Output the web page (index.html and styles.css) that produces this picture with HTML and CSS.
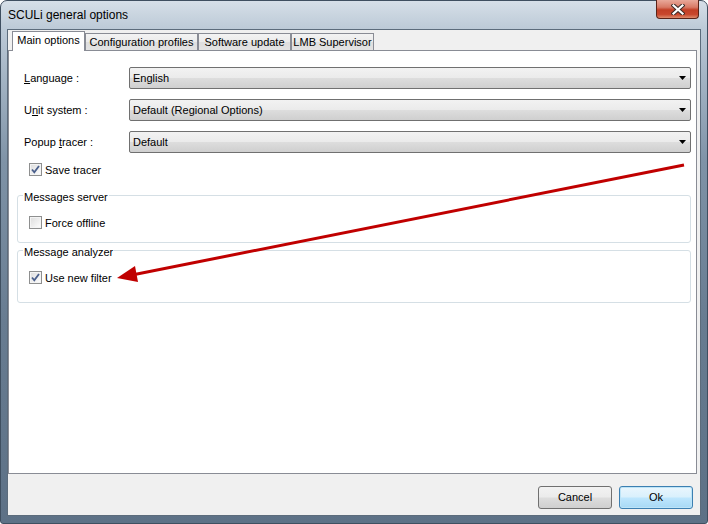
FILE: index.html
```html
<!DOCTYPE html>
<html lang="en">
<head>
    <meta charset="UTF-8">
    <link rel="stylesheet" href="styles.css">
    <title>SCULi general options</title>
</head>
<body>

    <div class="window">
        <div class="titlebar">
            <span class="title">SCULi general options</span>
            <div class="close-button">
                <svg width="14" height="11" viewBox="0 0 14 11">
                    <path d="M2.5 1.5L11.5 9.5M11.5 1.5L2.5 9.5" stroke="#3c2a26" stroke-width="4.2" stroke-linecap="square"/>
                    <path d="M2.5 1.5L11.5 9.5M11.5 1.5L2.5 9.5" stroke="#fff" stroke-width="2.2" stroke-linecap="square"/>
                </svg>
            </div>
        </div>

        <div class="client">
            <div class="tabs">
                <div class="tab active" style="width: 73px">Main options</div>
                <div class="tab" style="width: 113px">Configuration profiles</div>
                <div class="tab" style="width: 93px">Software update</div>
                <div class="tab" style="width: 83px">LMB Supervisor</div>
            </div>

            <div class="panel">
                <div class="field-row">
                    <label><u>L</u>anguage :</label>
                    <div class="combo"><span>English</span><svg width="7" height="4" viewBox="0 0 7 4"><path d="M0 0h7l-3.5 4z" fill="#000"/></svg></div>
                </div>
                <div class="field-row">
                    <label>U<u>n</u>it system :</label>
                    <div class="combo"><span>Default (Regional Options)</span><svg width="7" height="4" viewBox="0 0 7 4"><path d="M0 0h7l-3.5 4z" fill="#000"/></svg></div>
                </div>
                <div class="field-row">
                    <label>Popup <u>t</u>racer :</label>
                    <div class="combo"><span>Default</span><svg width="7" height="4" viewBox="0 0 7 4"><path d="M0 0h7l-3.5 4z" fill="#000"/></svg></div>
                </div>

                <div class="check-row save-tracer">
                    <span class="checkbox checked"></span>
                    <span>Save tracer</span>
                </div>

                <fieldset class="group group-server">
                    <legend>Messages server</legend>
                    <div class="check-row">
                        <span class="checkbox"></span>
                        <span>Force offline</span>
                    </div>
                </fieldset>

                <fieldset class="group group-analyzer">
                    <legend>Message analyzer</legend>
                    <div class="check-row">
                        <span class="checkbox checked"></span>
                        <span>Use new filter</span>
                    </div>
                </fieldset>
            </div>

            <div class="footer">
                <div class="button">Cancel</div>
                <div class="button default">Ok</div>
            </div>
        </div>
    </div>

    <!-- roter Pfeil über dem Dialog -->
    <svg class="arrow" width="708" height="524" viewBox="0 0 708 524">
        <line x1="684" y1="165" x2="132" y2="275" stroke="#c00000" stroke-width="3"/>
        <path d="M117 278L135 266L138 282Z" fill="#c00000"/>
    </svg>

</body>
</html>
```

FILE: styles.css
```css
/* Grundlayout */
body {
    margin: 0;
    background: #fff;
    font-family: "Liberation Sans", Arial, sans-serif;
    font-size: 11px;
    color: #000;
    position: relative;
    width: 708px;
    height: 524px;
    overflow: hidden;
}

.window {
    box-sizing: border-box;
    width: 708px;
    height: 524px;
    border: 1px solid #3f4f60;
    border-radius: 7px 7px 3px 3px;
    background: linear-gradient(180deg, #d6dfe8 0px, #bccad7 28px, #a7b7c7 70px, #7f93a7 160px, #687c91 320px, #5d7186 100%);
    display: flex;
    flex-direction: column;
}

/* Titelleiste */
.titlebar {
    height: 28px;
    display: flex;
    justify-content: space-between;
    align-items: flex-start;
    padding-left: 7px;
}

.title {
    font-size: 12px;
    line-height: 28px;
    color: #000;
}

.close-button {
    width: 43px;
    height: 19px;
    margin-top: -1px;
    margin-right: 8px;
    box-sizing: border-box;
    border: 1px solid #5a2318;
    border-top: none;
    border-radius: 0 0 4px 4px;
    background: linear-gradient(180deg, #e9a99a 0%, #d87a66 40%, #c23f26 55%, #c8472d 80%, #de8a6c 100%);
    display: flex;
    align-items: center;
    justify-content: center;
}

/* Innenbereich */
.client {
    margin: 0 6px;
    height: 487px;
    box-sizing: border-box;
    border: 1px solid #5c6c7c;
    background: #f0f0f0;
    display: flex;
    flex-direction: column;
}

.tabs {
    height: 21px;
    display: flex;
    align-items: flex-end;
    padding-left: 4px;
    position: relative;
    z-index: 1;
}

.tab {
    box-sizing: border-box;
    height: 17px;
    margin-bottom: 1px;
    border: 1px solid #898c95;
    border-bottom: none;
    background: linear-gradient(180deg, #f3f3f3 0%, #ebebeb 50%, #dedede 51%, #e3e3e3 100%);
    text-align: center;
    line-height: 16px;
}

.tab.active {
    height: 20px;
    margin-bottom: 0;
    background: #fff;
    line-height: 17px;
}

.panel {
    box-sizing: border-box;
    width: 689px;
    height: 424px;
    margin-top: -1px;
    border: 1px solid #898c95;
    background: #fff;
    padding: 16px 5px 0 8px;
}

/* Formularzeilen */
.field-row {
    display: flex;
    align-items: center;
    height: 22px;
    margin-bottom: 10px;
}

.field-row label {
    width: 105px;
    padding-left: 7px;
    flex-shrink: 0;
}

.combo {
    flex: 1;
    box-sizing: border-box;
    height: 22px;
    border: 1px solid #707070;
    border-radius: 2px;
    background: linear-gradient(180deg, #f2f2f2 0%, #ebebeb 48%, #dddddd 52%, #cfcfcf 100%);
    display: flex;
    justify-content: space-between;
    align-items: center;
    padding: 0 4px 0 3px;
}

.check-row {
    display: flex;
    align-items: center;
    height: 13px;
    gap: 3px;
}

.save-tracer {
    margin-top: 3px;
    margin-left: 12px;
}

.checkbox {
    box-sizing: border-box;
    width: 13px;
    height: 13px;
    border: 1px solid #8e8f8f;
    background: linear-gradient(135deg, #dcdcdc 0%, #f4f4f4 70%, #fff 100%);
    box-shadow: inset 0 0 0 1px #f4f4f4;
}

.checkbox.checked {
    background-image: url("data:image/svg+xml;utf8,<svg xmlns='http://www.w3.org/2000/svg' width='11' height='11'><path d='M2 5.5L4.3 8.3L9 2' fill='none' stroke='%234a5f8c' stroke-width='1.8'/></svg>"),
        linear-gradient(135deg, #dcdcdc 0%, #f4f4f4 70%, #fff 100%);
}

/* Gruppenboxen */
.group {
    margin: 0;
    border: 1px solid #d5dfe5;
    border-radius: 3px;
    padding: 0 0 0 11px;
    box-sizing: border-box;
}

.group legend {
    padding: 4px 1px 0;
    margin-left: -6px;
    line-height: 13px;
}

.group-server {
    margin-top: 11px;
    height: 56px;
}

.group-server .check-row {
    margin-top: 12px;
}

.group-analyzer {
    margin-top: -1px;
    height: 61px;
}

.group-analyzer .check-row {
    margin-top: 12px;
}

/* untere Buttonleiste */
.footer {
    flex: 1;
    display: flex;
    justify-content: flex-end;
    gap: 7px;
    padding: 12px 7px 0 0;
}

.button {
    box-sizing: border-box;
    width: 74px;
    height: 23px;
    border: 1px solid #707070;
    border-radius: 3px;
    background: linear-gradient(180deg, #f2f2f2 0%, #ebebeb 48%, #dddddd 52%, #cfcfcf 100%);
    text-align: center;
    line-height: 21px;
}

.button.default {
    border-color: #3c7fb1;
    background: linear-gradient(180deg, #eaf6fd 0%, #d9f0fc 48%, #bee6fd 52%, #a7d9f5 100%);
    box-shadow: inset 0 0 0 1px #bde4f7;
}

.arrow {
    position: absolute;
    left: 0;
    top: 0;
    pointer-events: none;
}
```
